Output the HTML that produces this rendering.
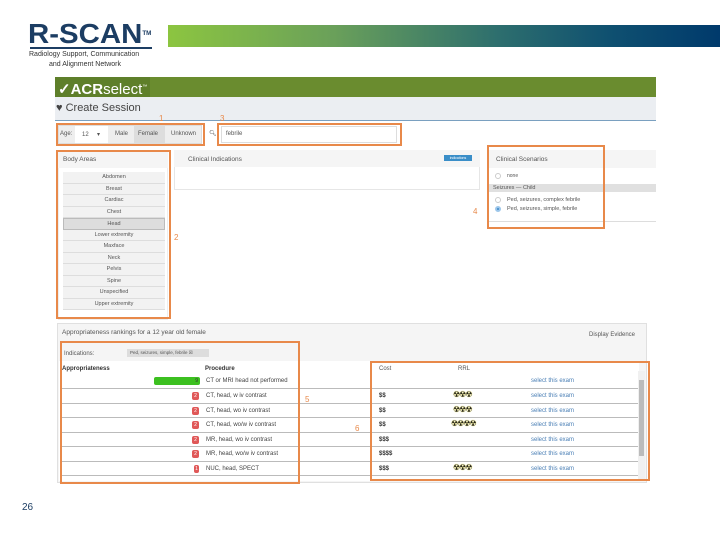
<!DOCTYPE html>
<html><head><meta charset="utf-8"><style>
*{margin:0;padding:0;box-sizing:border-box}
body{width:720px;height:540px;position:relative;background:#fff;font-family:"Liberation Sans",sans-serif;overflow:hidden;color:#555}
.a{position:absolute}
.ob{position:absolute;border:2px solid #e8894a}
.n{position:absolute;color:#e8894a;font-size:8px}
.t{font-size:6px;white-space:nowrap}
.li{position:absolute;left:63px;width:102px;height:11.5px;border-bottom:1px solid #ddd;background:#f2f2f2;font-size:5.5px;text-align:center;line-height:11px;color:#555}
.row{position:absolute;left:60px;width:578px;height:14.5px;border-bottom:1px solid #bbb;font-size:6px;line-height:14px}
.bd{position:absolute;left:132px;top:3px;width:7px;height:8px;background:#e05858;border-radius:2px;color:#fff;font-size:5px;line-height:8px;text-align:center}
.pr{position:absolute;left:146px;color:#444}
.c{position:absolute;left:319px;color:#333;font-weight:bold}
.s{position:absolute;left:471px;color:#4a7fb5}
.r{position:absolute;left:393px;top:-1px;color:#222;font-size:8px;letter-spacing:-1px;text-shadow:0 0 1px #e8d800;background:none}
</style></head><body>
<div class="a" style="left:28px;top:20px;font-size:28px;font-weight:bold;color:#1c3d63;line-height:28px;transform:scaleX(1.05);transform-origin:left">R-SCAN<span style="font-size:6px;vertical-align:top">TM</span></div>
<div class="a" style="left:30px;top:47px;width:122px;height:2px;background:#1c3d63"></div>
<div class="a t" style="left:29px;top:51px;font-size:7px;color:#333">Radiology Support, Communication</div>
<div class="a t" style="left:49px;top:61px;font-size:7px;color:#333">and Alignment Network</div>
<div class="a" style="left:168px;top:25px;width:552px;height:22px;background:linear-gradient(90deg,#8cc540 0%,#6aa05a 30%,#2d6e6e 60%,#0f5070 80%,#003a6c 100%)"></div>
<div class="a" style="left:55px;top:77px;width:601px;height:20px;background:#6a8c2f"></div>
<div class="a" style="left:55px;top:77px;width:95px;height:20px;background:#5e7f2a"></div>
<div class="a" style="left:58px;top:78px;font-size:15px;color:#fff;line-height:19px"><b>✓ACR</b>select<sup style="font-size:5px">™</sup></div>
<div class="a" style="left:55px;top:97px;width:601px;height:24px;background:#ebeef2;border-bottom:1px solid #7aa0c0"></div>
<div class="a" style="left:56px;top:102px;font-size:11px;color:#444">♥ Create Session</div>
<div class="a" style="left:58px;top:125px;width:144px;height:19px;background:#eee;border:1px solid #ddd"></div>
<div class="a t" style="left:60px;top:131px">Age:</div>
<div class="a" style="left:75px;top:126px;width:33px;height:17px;background:#fff"></div>
<div class="a t" style="left:82px;top:131px">12 &nbsp;&nbsp;&nbsp;&nbsp;▾</div>
<div class="a t" style="left:115px;top:131px">Male</div>
<div class="a" style="left:134px;top:126px;width:31px;height:17px;background:#ddd"></div>
<div class="a t" style="left:138px;top:131px">Female</div>
<div class="a t" style="left:171px;top:131px">Unknown</div>
<div class="a t" style="left:209px;top:130px">🔍︎</div>
<div class="a" style="left:221px;top:126px;width:176px;height:17px;background:#fff;border:1px solid #ddd"></div>
<div class="a t" style="left:226px;top:131px">febrile</div>
<div class="ob" style="left:56px;top:123px;width:149px;height:23px"></div>
<div class="ob" style="left:217px;top:123px;width:185px;height:23px"></div>
<div class="n" style="left:159px;top:114px">1</div>
<div class="n" style="left:220px;top:114px">3</div>
<div class="a" style="left:58px;top:150px;width:110px;height:170px;background:#fff;border:1px solid #eee"></div>
<div class="a" style="left:58px;top:150px;width:110px;height:18px;background:#f5f5f5"></div>
<div class="a t" style="left:63px;top:156px;font-size:6.5px">Body Areas</div>
<div class="li" style="top:172px">Abdomen</div><div class="li" style="top:183.5px">Breast</div><div class="li" style="top:195px">Cardiac</div><div class="li" style="top:206.5px">Chest</div><div class="li" style="top:218px;background:#ddd;border:1px solid #bbb">Head</div><div class="li" style="top:229.5px">Lower extremity</div><div class="li" style="top:241px">Maxface</div><div class="li" style="top:252.5px">Neck</div><div class="li" style="top:264px">Pelvis</div><div class="li" style="top:275.5px">Spine</div><div class="li" style="top:287px">Unspecified</div><div class="li" style="top:298.5px">Upper extremity</div>
<div class="ob" style="left:56px;top:150px;width:115px;height:169px"></div>
<div class="n" style="left:174px;top:233px">2</div>
<div class="a" style="left:174px;top:150px;width:306px;height:40px;border:1px solid #e6e6e6"></div>
<div class="a" style="left:174px;top:150px;width:306px;height:17px;background:#f5f5f5"></div>
<div class="a t" style="left:188px;top:156px;font-size:6.5px">Clinical Indications</div>
<div class="a" style="left:444px;top:155px;width:28px;height:6px;background:#3a8ec8;font-size:3.5px;color:#fff;text-align:center;line-height:6px">indications</div>
<div class="a" style="left:489px;top:150px;width:167px;height:72px;border-bottom:1px solid #ddd"></div>
<div class="a" style="left:489px;top:150px;width:167px;height:18px;background:#f5f5f5"></div>
<div class="a t" style="left:496px;top:156px;font-size:6.5px">Clinical Scenarios</div>
<div class="a" style="left:495px;top:173px;width:6px;height:6px;border:1px solid #ccc;border-radius:50%"></div>
<div class="a t" style="left:507px;top:173px;font-size:5px">none</div>
<div class="a" style="left:489px;top:184px;width:167px;height:8px;background:#e0e0e0"></div>
<div class="a t" style="left:493px;top:185px;font-size:5.5px">Seizures — Child</div>
<div class="a" style="left:495px;top:197px;width:6px;height:6px;border:1px solid #ccc;border-radius:50%"></div>
<div class="a t" style="left:507px;top:197px;font-size:5.5px">Ped, seizures, complex febrile</div>
<div class="a" style="left:495px;top:206px;width:6px;height:6px;border:2px solid #9cc6ea;background:#3a86c8;border-radius:50%"></div>
<div class="a t" style="left:507px;top:206px;font-size:5.5px">Ped, seizures, simple, febrile</div>
<div class="ob" style="left:487px;top:145px;width:118px;height:84px"></div>
<div class="n" style="left:473px;top:207px">4</div>
<div class="a" style="left:57px;top:323px;width:590px;height:160px;background:#f5f5f5;border:1px solid #e0e0e0"></div>
<div class="a t" style="left:62px;top:329px;font-size:6.5px">Appropriateness rankings for a 12 year old female</div>
<div class="a t" style="left:589px;top:332px;font-size:6px">Display Evidence</div>
<div class="a" style="left:59px;top:361px;width:580px;height:120px;background:#fff"></div>
<div class="a t" style="left:64px;top:351px">Indications:</div>
<div class="a" style="left:127px;top:349px;width:82px;height:8px;background:#ddd;font-size:4.5px;line-height:8px;padding-left:3px">Ped, seizures, simple, febrile ☒</div>
<div class="a t" style="left:62px;top:366px;font-weight:bold;color:#333">Appropriateness</div>
<div class="a t" style="left:205px;top:366px;font-weight:bold;color:#333">Procedure</div>
<div class="a t" style="left:379px;top:366px">Cost</div>
<div class="a t" style="left:458px;top:366px">RRL</div>
<div class="row" style="top:374px"><div class="a" style="left:94px;top:3px;width:46px;height:8px;background:#3cc020;border-radius:2px;color:#333;font-size:5px;text-align:right;padding-right:2px;line-height:8px">9</div><span class="pr">CT or MRI head not performed</span><span class="s">select this exam</span></div>
<div class="row" style="top:389px"><div class="bd">2</div><span class="pr">CT, head, w iv contrast</span><span class="c">$$</span><span class="r">☢☢☢</span><span class="s">select this exam</span></div>
<div class="row" style="top:403.5px"><div class="bd">2</div><span class="pr">CT, head, wo iv contrast</span><span class="c">$$</span><span class="r">☢☢☢</span><span class="s">select this exam</span></div>
<div class="row" style="top:418px"><div class="bd">2</div><span class="pr">CT, head, wo/w iv contrast</span><span class="c">$$</span><span class="r" style="left:391px">☢☢☢☢</span><span class="s">select this exam</span></div>
<div class="row" style="top:432.5px"><div class="bd">2</div><span class="pr">MR, head, wo iv contrast</span><span class="c">$$$</span><span class="s">select this exam</span></div>
<div class="row" style="top:447px"><div class="bd">2</div><span class="pr">MR, head, wo/w iv contrast</span><span class="c">$$$$</span><span class="s">select this exam</span></div>
<div class="row" style="top:461.5px"><div class="bd" style="width:5px;left:134px">1</div><span class="pr">NUC, head, SPECT</span><span class="c">$$$</span><span class="r">☢☢☢</span><span class="s">select this exam</span></div>
<div class="a" style="left:638px;top:371px;width:7px;height:108px;background:#f0f0f0"></div>
<div class="a" style="left:639px;top:380px;width:5px;height:76px;background:#bbb"></div>
<div class="ob" style="left:60px;top:341px;width:240px;height:143px"></div>
<div class="ob" style="left:370px;top:361px;width:280px;height:120px"></div>
<div class="n" style="left:305px;top:395px">5</div>
<div class="n" style="left:355px;top:424px">6</div>
<div class="a" style="left:22px;top:502px;font-size:10px;color:#1c3d63">26</div>
</body></html>
